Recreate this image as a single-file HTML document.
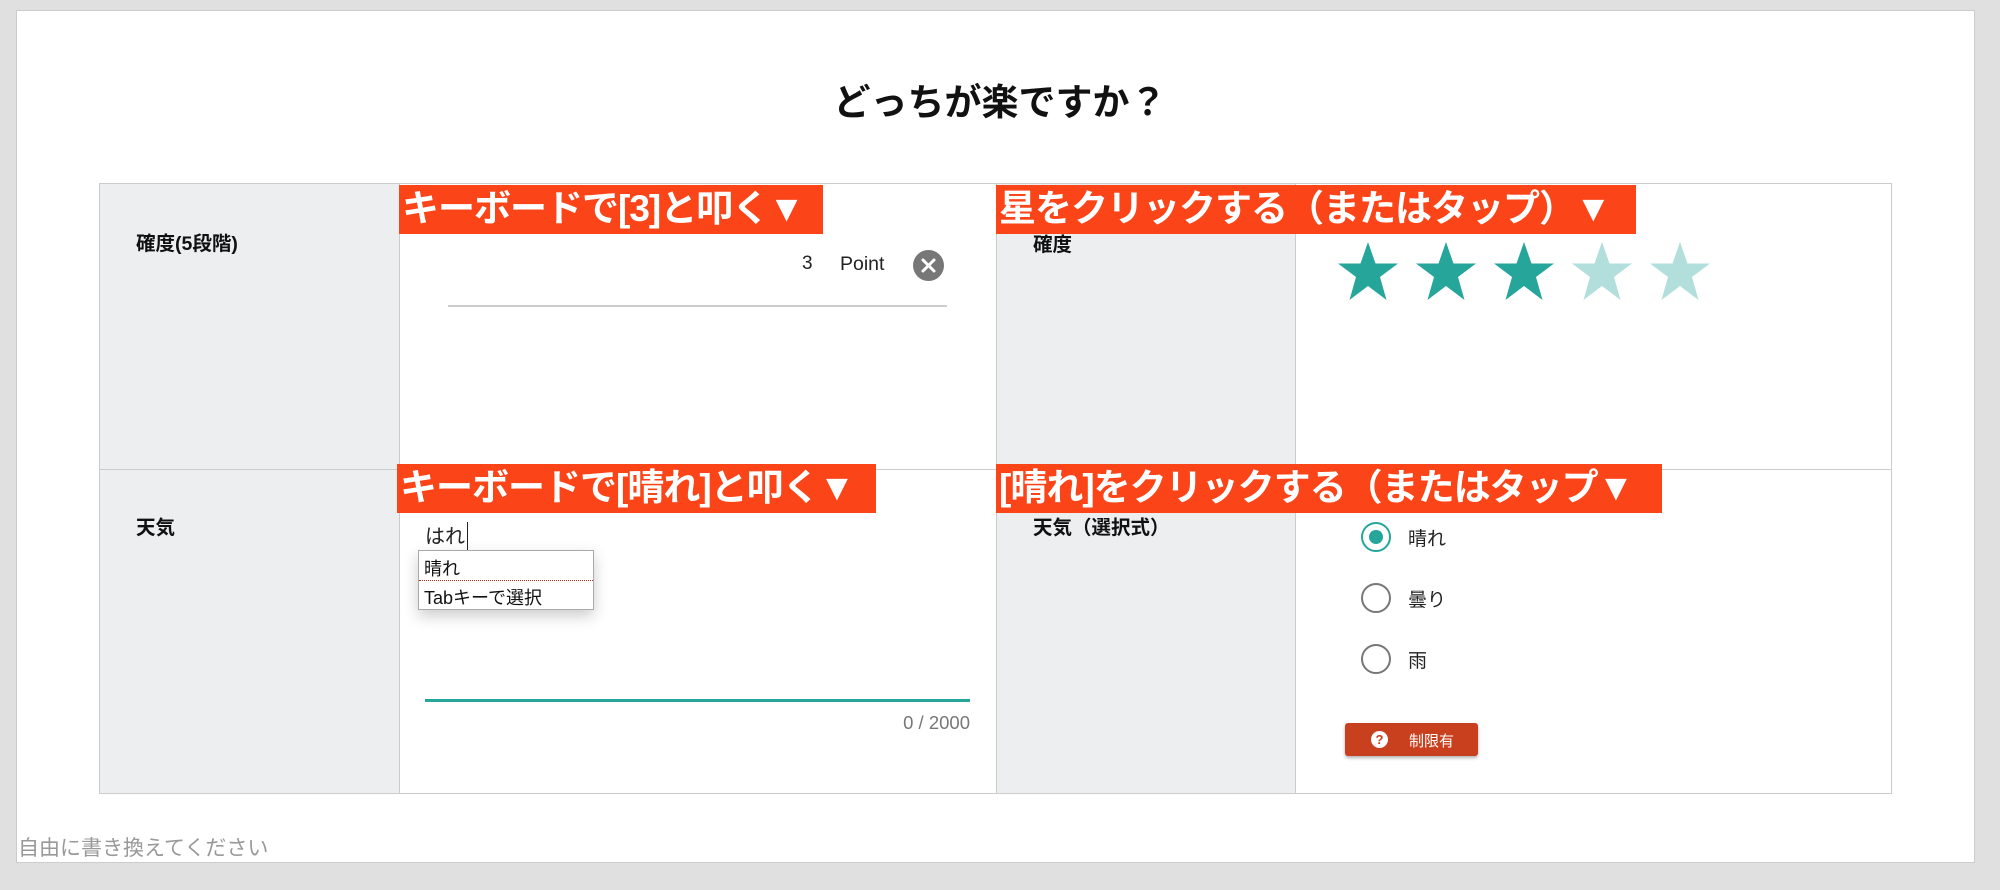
<!DOCTYPE html>
<html><head><meta charset="utf-8">
<style>
*{margin:0;padding:0;box-sizing:border-box}
body{width:2000px;height:890px;background:#e0e0e0;position:relative;overflow:hidden;font-family:"Liberation Sans","Noto Sans CJK JP",sans-serif;color:#222}
.a{position:absolute}
#page{left:16px;top:10px;width:1959px;height:853px;background:#fff;border:1px solid #ccc}
.title{left:0;width:2000px;top:72px;text-align:center;font-size:37px;font-weight:bold;color:#111}
.lab{background:#eceef0}
.cell{border:1px solid #ccc}
.lbl{font-size:19.5px;font-weight:bold;color:#111}
.ban{background:#fc4419;color:#fff;font-size:37px;font-weight:bold;line-height:48px;height:49px;white-space:nowrap;overflow:hidden;padding-left:3px;letter-spacing:-1px}
.radio{width:30px;height:30px;border-radius:50%;border:2.5px solid #777}
.rl{font-size:19px;color:#222}
</style></head><body>
<div class="a" id="page"></div>
<div class="a title">どっちが楽ですか？</div>

<div class="a lab cell" style="left:99px;top:183px;width:301px;height:287px"></div>
<div class="a cell" style="left:399px;top:183px;width:598px;height:287px"></div>
<div class="a lab cell" style="left:996px;top:183px;width:300px;height:287px"></div>
<div class="a cell" style="left:1295px;top:183px;width:597px;height:287px"></div>
<div class="a lab cell" style="left:99px;top:469px;width:301px;height:325px"></div>
<div class="a cell" style="left:399px;top:469px;width:598px;height:325px"></div>
<div class="a lab cell" style="left:996px;top:469px;width:300px;height:325px"></div>
<div class="a cell" style="left:1295px;top:469px;width:597px;height:325px"></div>

<div class="a lbl" style="left:136px;top:227px">確度(5段階)</div>
<div class="a lbl" style="left:1033px;top:228px">確度</div>
<div class="a lbl" style="left:136px;top:511px">天気</div>
<div class="a lbl" style="left:1033px;top:511px">天気（選択式）</div>

<div class="a" style="left:802px;top:253px;font-size:19px;color:#222">3</div>
<div class="a" style="left:840px;top:253px;font-size:19.5px;color:#222">Point</div>
<div class="a" style="left:913px;top:250px;width:31px;height:31px;border-radius:50%;background:#777"></div>
<svg class="a" style="left:913px;top:250px" width="31" height="31"><path d="M10 10L21 21M21 10L10 21" stroke="#fff" stroke-width="3" stroke-linecap="round"/></svg>
<div class="a" style="left:448px;top:305px;width:499px;height:2px;background:#ccc"></div>

<svg class="a" style="left:1336px;top:240px" width="380" height="64" viewBox="0 0 380 64">
<defs><path id="s" d="M32 2L39.5 23.5L62 23.5L44 37L50.5 60L32 46L13.5 60L20 37L2 23.5L24.5 23.5Z"/></defs>
<use href="#s" x="0" fill="#26a69a"/>
<use href="#s" x="78" fill="#26a69a"/>
<use href="#s" x="156" fill="#26a69a"/>
<use href="#s" x="234" fill="#b2dfdb"/>
<use href="#s" x="312" fill="#b2dfdb"/>
</svg>

<div class="a" style="left:425px;top:524px;font-size:20px;color:#222;border-bottom:1px solid #222;line-height:26px">はれ</div>
<div class="a" style="left:467px;top:522px;width:1px;height:28px;background:#222"></div>
<div class="a" style="left:418px;top:550px;width:176px;height:60px;background:#fff;border:1px solid #aaa;box-shadow:0 6px 14px rgba(0,0,0,0.2)"></div>
<div class="a" style="left:424px;top:555px;font-size:18px;color:#111">晴れ</div>
<div class="a" style="left:419px;top:580px;width:174px;height:1px;border-top:1px dotted #b03020"></div>
<div class="a" style="left:424px;top:584px;font-size:18px;color:#111">Tabキーで選択</div>
<div class="a" style="left:425px;top:699px;width:545px;height:3px;background:#26a69a"></div>
<div class="a" style="left:840px;top:712px;width:130px;text-align:right;font-size:18.5px;color:#777">0 / 2000</div>

<div class="a radio" style="left:1361px;top:522px;border-color:#26a69a"></div>
<div class="a" style="left:1369px;top:530px;width:14px;height:14px;border-radius:50%;background:#26a69a"></div>
<div class="a rl" style="left:1408px;top:524px">晴れ</div>
<div class="a radio" style="left:1361px;top:583px"></div>
<div class="a rl" style="left:1408px;top:585px">曇り</div>
<div class="a radio" style="left:1361px;top:644px"></div>
<div class="a rl" style="left:1408px;top:646px">雨</div>

<div class="a" style="left:1345px;top:723px;width:133px;height:33px;background:#c9401f;border-radius:3px;box-shadow:0 2px 3px rgba(0,0,0,0.3)"></div>
<div class="a" style="left:1371px;top:731px;width:17px;height:17px;border-radius:50%;background:#fff;color:#c9401f;font-size:13px;font-weight:bold;text-align:center;line-height:17px">?</div>
<div class="a" style="left:1409px;top:730px;font-size:15px;color:#fff">制限有</div>

<div class="a ban" style="left:399px;top:185px;width:424px">キーボードで[3]と叩く▼</div>
<div class="a ban" style="left:996px;top:185px;width:640px">星をクリックする（またはタップ）▼</div>
<div class="a ban" style="left:397px;top:464px;width:479px">キーボードで[晴れ]と叩く▼</div>
<div class="a ban" style="left:996px;top:464px;width:666px">[晴れ]をクリックする（またはタップ▼</div>

<div class="a" style="left:18px;top:832px;font-size:21px;color:#999">自由に書き換えてください</div>
</body></html>
